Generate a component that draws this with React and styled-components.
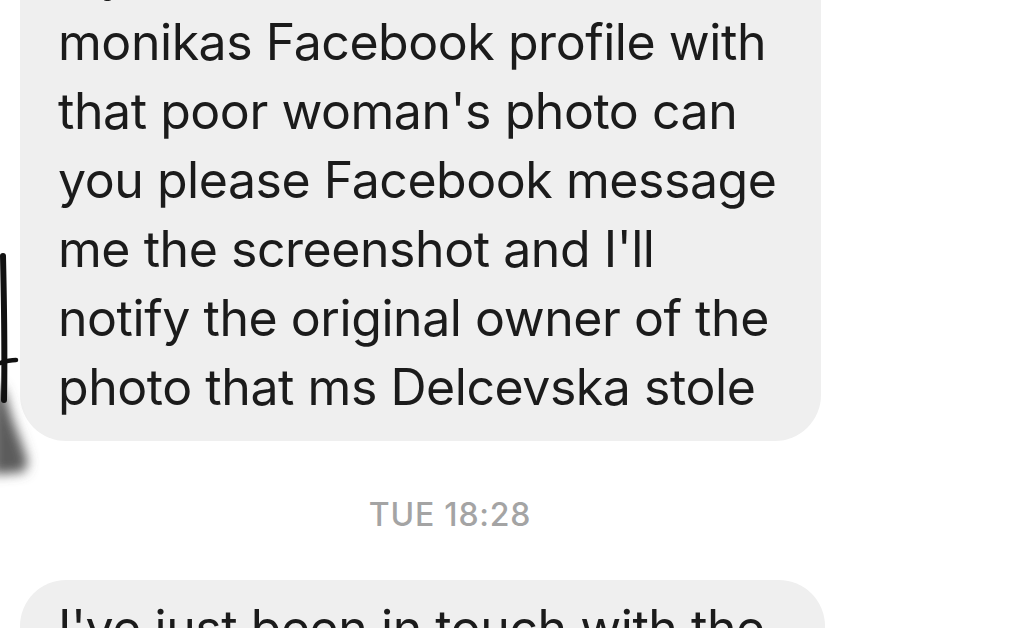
import React from "react";
import styled, { createGlobalStyle } from "styled-components";

const GlobalStyle = createGlobalStyle`
  html, body {
    margin: 0;
    padding: 0;
    background: #ffffff;
    overflow: hidden;
  }
  body {
    font-family: Inter, "Noto Sans", "Liberation Sans", sans-serif;
  }
`;

// Whole chat screen
const Screen = styled.div`
  position: relative;
  width: 1024px;
  height: 628px;
  overflow: hidden;
  background: #ffffff;
`;

// Column of messages
const Thread = styled.div`
  display: flex;
  flex-direction: column;
  align-items: flex-start;
  width: 860px;
  padding-left: 20px;
  margin-top: -75px;
`;

// Incoming message bubble
const Bubble = styled.div`
  box-sizing: border-box;
  width: ${(p) => p.width}px;
  padding: 14px 0 19px 38px;
  background: #efefef;
  border-radius: 46px;
  color: #1b1b1b;
  font-size: 50px;
  line-height: 69px;
  letter-spacing: -0.45px;
  white-space: nowrap;
`;

// Day / time divider
const Stamp = styled.div`
  align-self: stretch;
  text-align: center;
  margin: 56px 0 47px;
  color: #a4a4a4;
  font-size: 32px;
  line-height: 36px;
  font-weight: 500;
  letter-spacing: 0.8px;
`;

// Pen mark along the left edge
const Scribble = styled.svg`
  position: absolute;
  left: 0;
  top: 240px;
  width: 40px;
  height: 250px;
`;

const lines = (arr) =>
  arr.map((l, i) => (
    <React.Fragment key={i}>
      {l}
      {i < arr.length - 1 && <br />}
    </React.Fragment>
  ));

const App = () => (
  <Screen>
    <GlobalStyle />
    <Thread>
      <Bubble width={801}>
        {lines([
          "my friend has sent me",
          "monikas Facebook profile with",
          "that poor woman's photo can",
          "you please Facebook message",
          "me the screenshot and I'll",
          "notify the original owner of the",
          "photo that ms Delcevska stole",
        ])}
      </Bubble>
      <Stamp>TUE 18:28</Stamp>
      <Bubble width={805}>
        {lines(["I've just been in touch with the", "original owner of the photo"])}
      </Bubble>
    </Thread>
    <Scribble viewBox="0 0 40 250">
      <defs>
        <filter id="smudge" x="-50%" y="-50%" width="200%" height="200%">
          <feGaussianBlur stdDeviation="6" />
        </filter>
      </defs>
      <path
        d="M-8 140 L4 150 L12 178 L22 204 L28 222 L24 232 L0 234 L-8 234 Z"
        fill="#5c5c5c"
        filter="url(#smudge)"
      />
      <path d="M3 16 C4 60 5 110 4 160" stroke="#111" strokeWidth="6" fill="none" strokeLinecap="round" />
      <path d="M0 123 C6 121 11 120 16 120" stroke="#111" strokeWidth="4.5" fill="none" strokeLinecap="round" />
    </Scribble>
  </Screen>
);

export default App;
